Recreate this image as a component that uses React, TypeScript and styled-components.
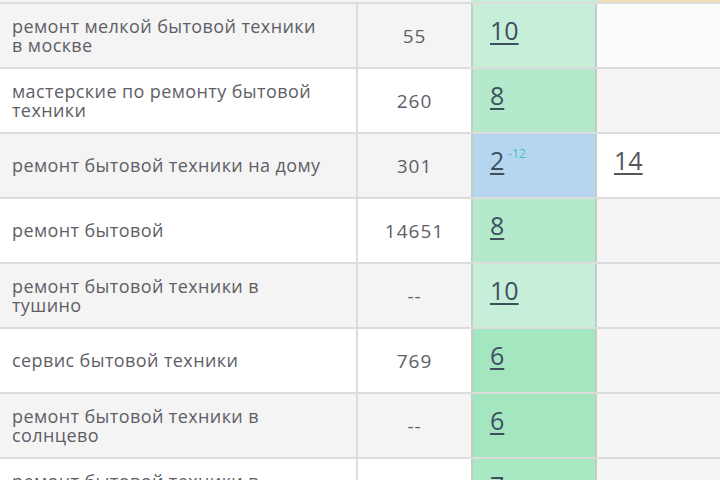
import React from "react";
import styled, { createGlobalStyle } from "styled-components";

const Global = createGlobalStyle`
  html, body {
    margin: 0;
    padding: 0;
    background: #ffffff;
    font-family: "Open Sans", "Liberation Sans", sans-serif;
  }
`;

const Table = styled.div`
  width: 720px;
  height: 480px;
  overflow: hidden;
  background: #fff;
`;

const TopStrip = styled.div`
  display: grid;
  grid-template-columns: 358px 113px 126px 1fr;
  height: 2px;
  border-bottom: 2px solid #dcdcdc;
`;

const StripCell = styled.div<{ $tone?: string }>`
  background: ${(p) => p.$tone || "#f4f4f4"};
`;

const Row = styled.div<{ $odd: boolean }>`
  display: grid;
  grid-template-columns: 358px 113px 126px 1fr;
  height: 63px;
  border-bottom: 2px solid #dcdcdc;
  background: ${(p) => (p.$odd ? "#f4f4f4" : "#ffffff")};
`;

const Phrase = styled.div`
  display: flex;
  align-items: center;
  padding: 0 30px 0 12px;
  border-right: 2px solid #dcdcdc;
  font-size: 18px;
  line-height: 19px;
  letter-spacing: 0.4px;
  color: #5e5e66;
`;

const Freq = styled.div`
  display: flex;
  align-items: center;
  justify-content: center;
  font-size: 19px;
  letter-spacing: 1px;
  color: #5e5e66;
`;

const Pos = styled.div<{ $bg: string }>`
  display: flex;
  align-items: flex-start;
  padding: 11px 0 0 17px;
  background: ${(p) => p.$bg};
  border-left: 2px solid #c4ccc8;
  border-right: 2px solid #c4ccc8;
`;

const PosLink = styled.a`
  font-size: 25px;
  line-height: 30px;
  color: #3f4f5e;
  text-decoration: underline;
  text-decoration-thickness: 2px;
  text-underline-offset: 3px;
`;

const Delta = styled.sup`
  font-size: 12px;
  color: #3cc7b0;
  margin-left: 4px;
  position: relative;
  top: 0px;
`;

const Extra = styled.div<{ $bg: string }>`
  display: flex;
  align-items: flex-start;
  padding: 11px 0 0 17px;
  background: ${(p) => p.$bg};
`;

const ExtraLink = styled(PosLink)`
  color: #55555d;
`;

type Item = {
  phrase: string;
  freq: string;
  pos: string;
  bg: string;
  delta?: string;
  extra?: string;
  extraBg: string;
};

const rows: Item[] = [
  { phrase: "ремонт мелкой бытовой техники в москве", freq: "55", pos: "10", bg: "#c7eed9", extraBg: "#fbfbfb" },
  { phrase: "мастерские по ремонту бытовой техники", freq: "260", pos: "8", bg: "#b4eacb", extraBg: "#f5f5f5" },
  { phrase: "ремонт бытовой техники на дому", freq: "301", pos: "2", delta: "-12", bg: "#b6d6ef", extra: "14", extraBg: "#ffffff" },
  { phrase: "ремонт бытовой", freq: "14651", pos: "8", bg: "#b4eacb", extraBg: "#f5f5f5" },
  { phrase: "ремонт бытовой техники в тушино", freq: "--", pos: "10", bg: "#c7eed9", extraBg: "#f5f5f5" },
  { phrase: "сервис бытовой техники", freq: "769", pos: "6", bg: "#a4e6c0", extraBg: "#f5f5f5" },
  { phrase: "ремонт бытовой техники в солнцево", freq: "--", pos: "6", bg: "#a4e6c0", extraBg: "#f5f5f5" },
  { phrase: "ремонт бытовой техники в митино", freq: "", pos: "7", bg: "#a8e8c3", extraBg: "#f5f5f5" },
];

export default function App() {
  return (
    <>
      <Global />
      <Table>
        <TopStrip>
          <StripCell />
          <StripCell />
          <StripCell $tone="#c7eed9" />
          <StripCell $tone="#f3dfb4" />
        </TopStrip>
        {rows.map((r, i) => (
          <Row key={i} $odd={i % 2 === 0}>
            <Phrase>{r.phrase}</Phrase>
            <Freq>{r.freq}</Freq>
            <Pos $bg={r.bg}>
              <PosLink>{r.pos}</PosLink>
              {r.delta && <Delta>{r.delta}</Delta>}
            </Pos>
            <Extra $bg={r.extraBg}>
              {r.extra && <ExtraLink>{r.extra}</ExtraLink>}
            </Extra>
          </Row>
        ))}
      </Table>
    </>
  );
}
